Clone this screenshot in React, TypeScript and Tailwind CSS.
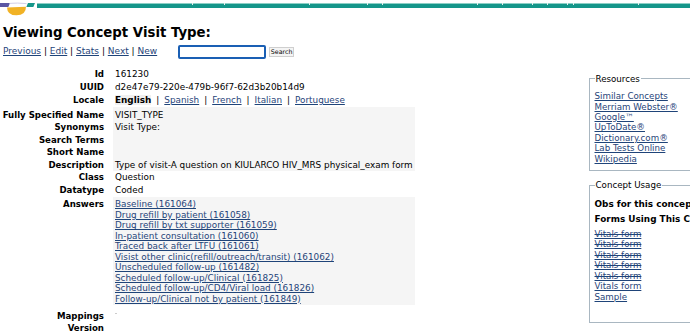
import React from "react";

const link = "text-[#1f4479] underline";
const ticks = [192, 224, 309, 367, 382, 477, 502, 532, 547, 567, 573, 638];

const answers = [
  "Baseline (161064)",
  "Drug refill by patient (161058)",
  "Drug refill by txt supporter (161059)",
  "In-patient consultation (161060)",
  "Traced back after LTFU (161061)",
  "Visist other clinic(refill/outreach/transit) (161062)",
  "Unscheduled follow-up (161482)",
  "Scheduled follow-up/Clinical (161825)",
  "Scheduled follow-up/CD4/Viral load (161826)",
  "Follow-up/Clinical not by patient (161849)",
];

const resources = [
  "Similar Concepts",
  "Merriam Webster®",
  "Google™",
  "UpToDate®",
  "Dictionary.com®",
  "Lab Tests Online",
  "Wikipedia",
];

function Row({
  label,
  children,
  rowCls = "leading-[13px]",
  valueCls = "",
}: {
  label: string;
  children?: React.ReactNode;
  rowCls?: string;
  valueCls?: string;
}) {
  return (
    <div className={"flex " + rowCls}>
      <div className="w-[105px] shrink-0 pr-[1px] text-right font-bold text-[8.6px] whitespace-nowrap">
        {label}
      </div>
      <div className={"ml-[8px] w-[302px] shrink-0 pl-[2px] whitespace-nowrap " + valueCls}>
        {children ?? "\u00a0"}
      </div>
    </div>
  );
}

export default function App() {
  return (
    <div className="w-[690px] h-[336px] overflow-hidden bg-white text-black font-['DejaVu_Sans',sans-serif]">
      {/* header strip */}
      <div className="flex h-[18px]">
        <svg width="37" height="18" viewBox="0 0 37 18" className="shrink-0">
          <path d="M0 3H10L8.3 7H0Z" fill="#5b56a3" />
          <path d="M9.6 3.4Q17 2.6 26.5 3.6" stroke="#d3d0e8" strokeWidth="1" fill="none" />
          <path d="M28 3H35L33.3 7H26.3Z" fill="#16978a" />
          <path d="M7 7.4L26 6.8Q26 15.3 16.5 15.3Q7.3 15.3 7 7.4Z" fill="#f1b225" />
        </svg>
        <div className="relative mt-[3px] h-[5px] flex-1 border-t border-[#8dcfc6] bg-[#15968a]">
          {ticks.map((x) => (
            <span
              key={x}
              className="absolute top-[-1px] h-[2px] w-[1px] bg-[#e6eeee]"
              style={{ left: x - 37 }}
            />
          ))}
        </div>
      </div>

      <h1 className="mt-[7px] ml-[3px] text-[13.3px] leading-[16px] font-bold">
        Viewing Concept Visit Type:
      </h1>

      <div className="mt-[3.7px] ml-[3px] flex h-[14px] items-center text-[9px]">
        <span className="whitespace-pre">
          <a className={link}>Previous</a> | <a className={link}>Edit</a> |{" "}
          <a className={link}>Stats</a> | <a className={link}>Next</a> |{" "}
          <a className={link}>New</a>
        </span>
        <input
          className="ml-[21px] h-[14px] w-[88px] rounded-[2px] border-2 border-[#1a5fb4] bg-white outline-none"
          readOnly
        />
        <button className="ml-[3px] h-[10px] w-[25px] border border-[#cfcfcf] bg-[#f4f4f4] text-[6.3px] leading-[8px] text-black">
          Search
        </button>
      </div>

      <div className="mt-[9.3px] flex">
        <div className="w-[588.5px] shrink-0 text-[8.85px]">
          <Row label="Id">161230</Row>
          <Row label="UUID">d2e47e79-220e-479b-96f7-62d3b20b14d9</Row>
          <Row label="Locale">
            <span className="bg-[#f0f0f0] font-bold">English</span>
            <span className="px-[5px]">|</span>
            <a className={link}>Spanish</a>
            <span className="px-[5px]">|</span>
            <a className={link}>French</a>
            <span className="px-[5px]">|</span>
            <a className={link}>Italian</a>
            <span className="px-[5px]">|</span>
            <a className={link}>Portuguese</a>
          </Row>
          <Row label="Fully Specified Name" rowCls="leading-[12.5px] pt-[2px] [&>div:last-child]:-mt-[2px] [&>div:last-child]:pt-[2px]" valueCls="bg-[#f5f5f5]">
            VISIT_TYPE
          </Row>
          <Row label="Synonyms" rowCls="leading-[12.5px]" valueCls="bg-[#f5f5f5]">
            Visit Type:
          </Row>
          <Row label="Search Terms" rowCls="leading-[12.5px]" valueCls="bg-[#f5f5f5]" />
          <Row label="Short Name" rowCls="leading-[12.5px]" valueCls="bg-[#f5f5f5]" />
          <Row label="Description" rowCls="leading-[12.5px]" valueCls="bg-[#f5f5f5]">
            Type of visit-A question on KIULARCO HIV_MRS physical_exam form
          </Row>
          <Row label="Class">Question</Row>
          <Row label="Datatype">Coded</Row>
          <Row label="Answers" rowCls="leading-[10.45px] pt-[2px] [&>div:last-child]:-mt-[2px] [&>div:last-child]:pt-[2px] [&>div:last-child]:pb-[1px]" valueCls="bg-[#f5f5f5]">
            {answers.map((a) => (
              <a key={a} className={"block " + link}>
                {a}
              </a>
            ))}
          </Row>
          <div className="mt-[5px]">
            <Row label="Mappings" rowCls="leading-[12px]">
              <span className="inline-block h-[1px] w-[2px] bg-[#cccccc] align-top mt-[3px]" />
            </Row>
            <Row label="Version" rowCls="leading-[12px]" />
          </div>
        </div>

        <div className="w-[200px] shrink-0 pt-[5.8px] text-[8.7px]">
          <fieldset className="border border-[#a9b7c1] pl-[5px] pt-[7px] pb-[6px]">
            <legend className="px-[1px] leading-[10.4px]">Resources</legend>
            {resources.map((r) => (
              <a key={r} className={"block leading-[10.4px] whitespace-nowrap " + link}>
                {r}
              </a>
            ))}
          </fieldset>
          <fieldset className="mt-[9px] border border-[#a9b7c1] pl-[5px] pt-[7px] pb-[20px]">
            <legend className="px-[1px] leading-[10.4px]">Concept Usage</legend>
            <div className="font-bold text-[8.9px] leading-[15px] whitespace-nowrap">
              Obs for this concept: 0
            </div>
            <div className="font-bold text-[8.9px] leading-[15px] whitespace-nowrap">
              Forms Using This Concept
            </div>
            <div className="mt-[1.5px]">
              {[0, 1, 2, 3, 4].map((i) => (
                <a
                  key={i}
                  className="block leading-[10.5px] text-[#1f4479] [text-decoration-line:underline_line-through] whitespace-nowrap"
                >
                  Vitals form
                </a>
              ))}
              <a className={"block leading-[10.5px] whitespace-nowrap " + link}>Vitals form</a>
              <a className={"block leading-[10.5px] whitespace-nowrap " + link}>Sample</a>
            </div>
          </fieldset>
        </div>
      </div>
    </div>
  );
}
